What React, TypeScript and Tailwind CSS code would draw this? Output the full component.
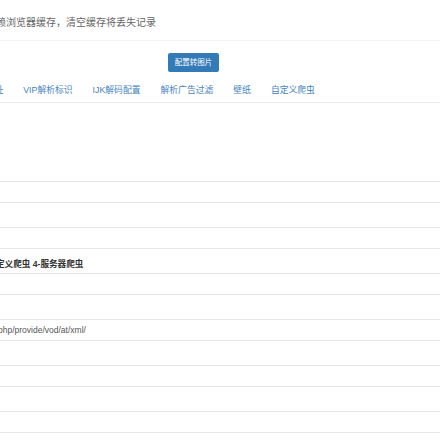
export default function App() {
  const tabs = ["解析地址", "VIP解析标识", "IJK解码配置", "解析广告过滤", "壁纸", "自定义爬虫"];
  const Field = ({ children }: { children?: React.ReactNode }) => (
    <div className="h-[22px] border-y border-[#e6e6e6] flex items-center overflow-hidden whitespace-nowrap">
      {children}
    </div>
  );
  return (
    <div className="w-[440px] h-[440px] overflow-hidden bg-white font-['Liberation_Sans','Noto_Sans_CJK_SC',sans-serif]">
      <div className="box-content h-[36px] pt-[4px] border-b border-[#f3f3f3] flex items-center overflow-hidden">
        <span className="-ml-[14px] whitespace-nowrap text-[10px] text-[#666]">依赖浏览器缓存，清空缓存将丢失记录</span>
      </div>
      <div className="pt-[12px] pl-[168px]">
        <button className="w-[51px] h-[19px] bg-[#337ab7] rounded-[2px] text-white text-[7.5px] flex items-center justify-center">
          配置转图片
        </button>
      </div>
      <div className="mt-[7px] box-content h-[23px] border-b border-[#ececec] overflow-hidden">
        <div className="-ml-[42px] flex h-full items-center whitespace-nowrap">
          {tabs.map((t) => (
            <div key={t} className="px-[10px] text-[8.8px] text-[#4683c0]">
              {t}
            </div>
          ))}
        </div>
      </div>
      <div className="mt-[78px] flex flex-col">
        <Field />
        <div className="h-[24px]" />
        <Field />
        <div className="h-[24px] overflow-hidden whitespace-nowrap pt-[10px]">
          <span className="block -ml-[4px] text-[8.6px] leading-[10px] font-bold text-[#333]">定义爬虫 4-服务器爬虫</span>
        </div>
        <Field />
        <div className="h-[24px]" />
        <Field>
          <span className="-ml-[2px] text-[8.5px] text-[#555]">php/provide/vod/at/xml/</span>
        </Field>
        <div className="h-[24px]" />
        <Field />
        <div className="h-[24px]" />
        <Field />
      </div>
    </div>
  );
}
